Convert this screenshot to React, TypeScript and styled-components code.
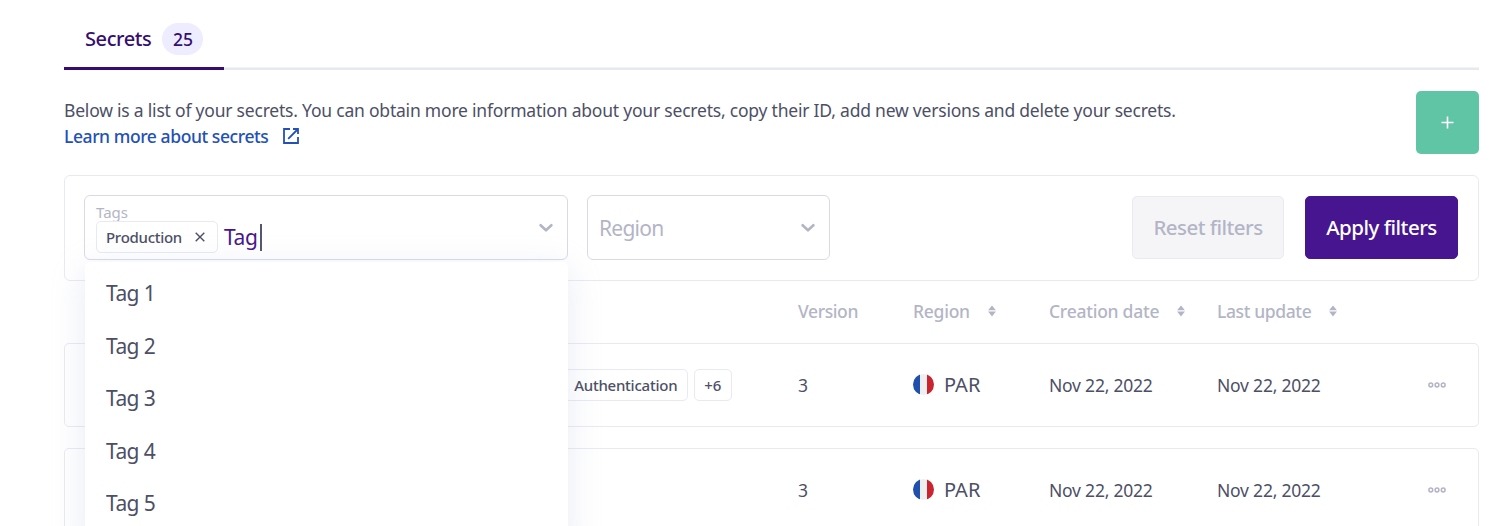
import React from "react";
import styled, { createGlobalStyle } from "styled-components";

const color = {
  text: "#4d4f66",
  muted: "#b3b5c6",
  line: "#e9eaf1",
  field: "#d8dae8",
  brand: "#350e70",
  action: "#46158f",
  link: "#2350b9",
};

const GlobalStyle = createGlobalStyle`
  *, *::before, *::after { box-sizing: border-box; }
  html, body { margin: 0; padding: 0; background: #fff; overflow: hidden; }
  body { font-family: "Noto Sans", sans-serif; color: ${color.text}; }
  button { font-family: inherit; cursor: pointer; }
`;

const Page = styled.main`
  height: 526px;
  overflow: hidden;
  padding: 8px 31px 0 64px;
`;

const Text = styled.span<{ $size?: number; $track?: number; $weight?: number; $tone?: string }>`
  font-size: ${(p) => p.$size ?? 17.5}px;
  letter-spacing: ${(p) => p.$track ?? 0}px;
  font-weight: ${(p) => p.$weight ?? 400};
  color: ${(p) => p.$tone ?? color.text};
  line-height: 26px;
  white-space: nowrap;
`;

const Tabs = styled.nav`
  display: flex;
  height: 62px;
  box-shadow: inset 0 -2.5px 0 #e8e9f0;
`;

const Tab = styled.a`
  display: flex;
  align-items: center;
  gap: 11px;
  width: 160px;
  padding: 3px 0 0 21px;
  border-bottom: 3px solid ${color.brand};
`;

const Count = styled.span`
  display: flex;
  align-items: center;
  justify-content: center;
  width: 41px;
  height: 32px;
  border-radius: 16px;
  background: #eeecff;
`;

const Intro = styled.section`
  display: flex;
  justify-content: space-between;
  align-items: flex-start;
  margin-top: 21.4px;
`;

const Copy = styled.div`
  display: flex;
  flex-direction: column;
  padding-top: 5.4px;
`;

const Link = styled.a`
  display: flex;
  align-items: center;
  gap: 14px;
`;

const AddButton = styled.button`
  display: flex;
  align-items: center;
  justify-content: center;
  width: 63px;
  height: 63px;
  padding: 0;
  border: 0;
  border-radius: 5px;
  background: #60c5a5;
`;

const Filters = styled.section`
  display: flex;
  align-items: center;
  height: 105.6px;
  margin-top: 20.6px;
  padding: 0 20px 0 19px;
  border: 1.5px solid ${color.line};
  border-radius: 6px;
`;

const Select = styled.div<{ $width: number }>`
  position: relative;
  display: flex;
  align-items: center;
  justify-content: space-between;
  width: ${(p) => p.$width}px;
  height: 65px;
  padding: 0 13px 0 11px;
  border: 1px solid ${color.field};
  border-radius: 6px;
  & + & { margin-left: 19px; }
`;

const Field = styled.div`
  display: flex;
  flex-direction: column;
`;

const FieldLabel = styled(Text)`
  line-height: 18px;
`;

const Entry = styled.div`
  display: flex;
  align-items: center;
  gap: 6px;
`;

const Chip = styled.span<{ $removable?: boolean }>`
  display: flex;
  align-items: center;
  gap: 13px;
  height: 32px;
  padding: 0 ${(p) => (p.$removable ? 12 : 10)}px 0 9px;
  border: 1.5px solid ${color.line};
  border-radius: 5px;
`;

const Typed = styled.span`
  display: flex;
  align-items: center;
  gap: 2px;
  padding-top: 1px;
`;

const Caret = styled.i`
  width: 2px;
  height: 27px;
  background: #55576e;
`;

const Menu = styled.ul`
  position: absolute;
  z-index: 2;
  top: 66px;
  left: 0;
  width: 483px;
  margin: 0;
  padding: 5px 0 20px;
  list-style: none;
  border-radius: 5px;
  background: #fff;
  box-shadow: 0 7px 34px 1px rgba(150, 160, 205, 0.2);
`;

const Option = styled.li`
  display: flex;
  align-items: center;
  height: 52.4px;
  padding-left: 21px;
`;

const Actions = styled.div`
  display: flex;
  gap: 21px;
  margin-left: auto;
`;

const Button = styled.button<{ $primary?: boolean }>`
  width: ${(p) => (p.$primary ? 153 : 152)}px;
  height: 63px;
  padding: 0 0 1px;
  border: 1.5px solid ${(p) => (p.$primary ? color.action : "#e9eaf0")};
  border-radius: 5px;
  background: ${(p) => (p.$primary ? color.action : "#f5f5f8")};
`;

const Row = styled.div`
  display: grid;
  grid-template-columns: 733px 115px 136px 168px 211px 1fr;
  align-items: center;
  height: 84px;
  margin-bottom: 21px;
  border: 1px solid ${color.line};
  border-radius: 5px;
`;

const HeadRow = styled(Row)`
  height: 62.2px;
  margin-bottom: 0;
  padding-bottom: 1px;
  border-color: transparent;
`;

const Cell = styled.div<{ $gap?: number }>`
  display: flex;
  align-items: center;
  gap: ${(p) => p.$gap ?? 0}px;
`;

const TagCell = styled(Cell)`
  justify-content: flex-end;
  padding-right: 66px;
`;

const Chevron = () => (
  <svg width="16" height="10" viewBox="0 0 16 10" fill="none">
    <path d="M2.6 2.2 8 7.3l5.4-5.1" stroke={color.muted} strokeWidth="2.6" strokeLinecap="round" strokeLinejoin="round" />
  </svg>
);

const Sort = () => (
  <svg width="8" height="12" viewBox="0 0 8 12" fill={color.muted}>
    <path d="M4 .4 7.9 5.2H.1ZM4 11.4 .1 6.6h7.8Z" />
  </svg>
);

const External = () => (
  <svg width="18" height="18" viewBox="0 0 18 18" fill="none" stroke={color.link} strokeWidth="1.8">
    <path d="M8 2H2v14h14v-6M11 2h5v5M16 2 6.2 11.8" />
  </svg>
);

const Close = () => (
  <svg width="10" height="10" viewBox="0 0 10 10" stroke={color.text} strokeWidth="1.4">
    <path d="M.7.7l8.6 8.6M9.3.7.7 9.3" />
  </svg>
);

const Plus = () => (
  <svg width="13" height="13" viewBox="0 0 13 13" stroke="#fff" strokeWidth="1.6">
    <path d="M6.5.5v12M.5 6.5h12" />
  </svg>
);

const Dots = () => (
  <svg width="18" height="6" viewBox="0 0 18 6" fill="none" stroke={color.muted} strokeWidth="1.5">
    <circle cx="2.8" cy="3" r="1.9" />
    <circle cx="9" cy="3" r="1.9" />
    <circle cx="15.2" cy="3" r="1.9" />
  </svg>
);

const FlagSvg = styled.svg`
  border-radius: 50%;
`;

const Flag = () => (
  <FlagSvg width="21" height="21" viewBox="0 0 21 21">
    <path fill="#efeff0" d="M0 0h21v21H0z" />
    <path fill="#1f50ae" d="M0 0h7v21H0z" />
    <path fill="#c9252f" d="M14 0h7v21h-7z" />
  </FlagSvg>
);

const options = ["Tag 1", "Tag 2", "Tag 3", "Tag 4", "Tag 5"];

const headings = [
  { label: "Version", track: -0.4, sortable: false },
  { label: "Region", track: -0.25, sortable: true },
  { label: "Creation date", track: -0.25, sortable: true },
  { label: "Last update", track: -0.38, sortable: true },
];

const secrets = [
  { tags: ["Authentication", "+6"], version: "3", region: "PAR", created: "Nov 22, 2022", updated: "Nov 22, 2022" },
  { tags: [], version: "3", region: "PAR", created: "Nov 22, 2022", updated: "Nov 22, 2022" },
];

export default function App() {
  return (
    <Page>
      <GlobalStyle />
      <Tabs>
        <Tab>
          <Text $size={20} $track={-0.4} $weight={500} $tone={color.brand}>Secrets</Text>
          <Count>
            <Text $weight={500} $tone={color.brand}>25</Text>
          </Count>
        </Tab>
      </Tabs>

      <Intro>
        <Copy>
          <Text $track={-0.21}>
            Below is a list of your secrets. You can obtain more information about your secrets, copy their ID, add new versions and delete your secrets.
          </Text>
          <Link>
            <Text $track={-0.42} $weight={500} $tone={color.link}>Learn more about secrets</Text>
            <External />
          </Link>
        </Copy>
        <AddButton aria-label="Add secret"><Plus /></AddButton>
      </Intro>

      <Filters>
        <Select $width={484}>
          <Field>
            <FieldLabel $size={15} $tone={color.muted}>Tags</FieldLabel>
            <Entry>
              <Chip $removable>
                <Text $size={15} $track={-0.28} $weight={500}>Production</Text>
                <Close />
              </Chip>
              <Typed>
                <Text $size={21} $track={-0.4} $tone={color.action}>Tag</Text>
                <Caret />
              </Typed>
            </Entry>
          </Field>
          <Chevron />
          <Menu>
            {options.map((o) => (
              <Option key={o}>
                <Text $size={21} $track={-0.6}>{o}</Text>
              </Option>
            ))}
          </Menu>
        </Select>
        <Select $width={243}>
          <Text $size={21} $track={-0.75} $tone={color.muted}>Region</Text>
          <Chevron />
        </Select>
        <Actions>
          <Button>
            <Text $size={20.5} $track={-0.55} $weight={500} $tone={color.muted}>Reset filters</Text>
          </Button>
          <Button $primary>
            <Text $size={20.5} $track={-0.5} $weight={500} $tone="#fff">Apply filters</Text>
          </Button>
        </Actions>
      </Filters>

      <HeadRow>
        <Cell />
        {headings.map((h) => (
          <Cell key={h.label} $gap={18}>
            <Text $track={h.track} $weight={500} $tone={color.muted}>{h.label}</Text>
            {h.sortable && <Sort />}
          </Cell>
        ))}
      </HeadRow>

      {secrets.map((s, i) => (
        <Row key={i}>
          <TagCell $gap={6}>
            {s.tags.map((t) => (
              <Chip key={t}>
                <Text $size={15} $track={-0.24} $weight={500}>{t}</Text>
              </Chip>
            ))}
          </TagCell>
          <Cell><Text>{s.version}</Text></Cell>
          <Cell $gap={10}>
            <Flag />
            <Text $size={20}>{s.region}</Text>
          </Cell>
          <Cell><Text $track={-0.22}>{s.created}</Text></Cell>
          <Cell><Text $track={-0.22}>{s.updated}</Text></Cell>
          <Cell><Dots /></Cell>
        </Row>
      ))}
    </Page>
  );
}
